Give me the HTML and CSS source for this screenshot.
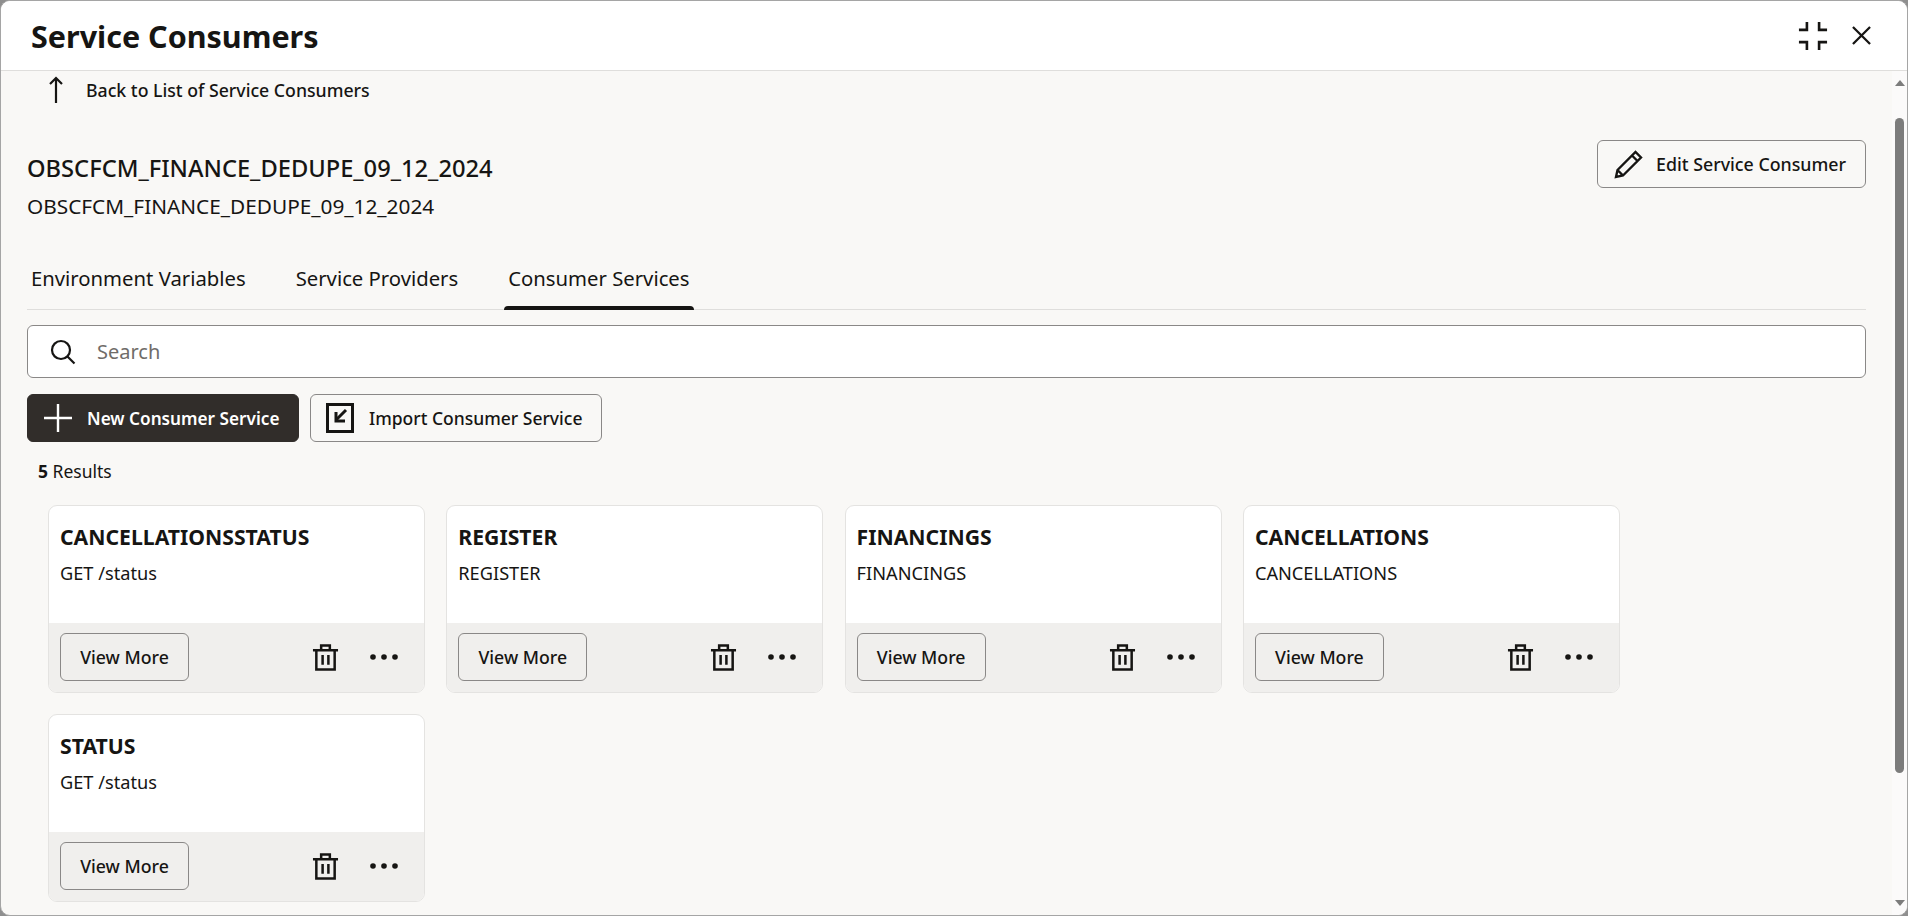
FILE: index.html
```html
<!DOCTYPE html>
<html lang="en">

<head>
    <meta charset="UTF-8">
    <title>Service Consumers</title>
    <link rel="stylesheet" href="styles.css">
</head>

<body>
    <div class="window">
        <div class="window-header">
            <h1>Service Consumers</h1>
            <div class="window-actions">
                <svg class="icon-collapse" viewBox="0 0 32 32" fill="none" stroke="#161513" stroke-width="2.800">
                    <path d="M1 9.500h8.500V1M22.500 1v8.500H31M1 22.500h8.500V31M31 22.500h-8.500V31" />
                </svg>
                <svg class="icon-close" viewBox="0 0 20 20" fill="none" stroke="#161513" stroke-width="2.400">
                    <path d="M1 1l18 18M19 1L1 19" />
                </svg>
            </div>
        </div>

        <div class="window-body">
            <div class="content">
                <a class="back-link">
                    <svg class="icon-back" viewBox="0 0 16 28" fill="none" stroke="#161513" stroke-width="2.200">
                        <path d="M8 27V2M2 8l6-6 6 6" />
                    </svg>
                    <span>Back to List of Service Consumers</span>
                </a>

                <div class="title-row">
                    <div>
                        <h2>OBSCFCM_FINANCE_DEDUPE_09_12_2024</h2>
                        <p class="subtitle">OBSCFCM_FINANCE_DEDUPE_09_12_2024</p>
                    </div>
                    <button class="btn btn-edit">
                        <svg class="icon-btn" viewBox="0 0 30 30" fill="none" stroke="#161513" stroke-width="2.400">
                            <path d="M2 28l1.500-7L21.500 3l5.500 5.500L9 26.500zM3.500 21l5.500 5.500M18 6.500l5.500 5.500" />
                        </svg>
                        Edit Service Consumer
                    </button>
                </div>

                <div class="tabs">
                    <div class="tab">Environment Variables</div>
                    <div class="tab">Service Providers</div>
                    <div class="tab tab-active">Consumer Services</div>
                </div>

                <div class="search">
                    <svg class="icon-search" viewBox="0 0 26 26" fill="none" stroke="#161513" stroke-width="2.200">
                        <circle cx="11" cy="11" r="9" />
                        <path d="M17.500 17.500l7 7" />
                    </svg>
                    <span>Search</span>
                </div>

                <div class="toolbar">
                    <button class="btn btn-primary">
                        <svg class="icon-plus" viewBox="0 0 28 28" fill="none" stroke="#fff" stroke-width="2.400">
                            <path d="M14 0v28M0 14h28" />
                        </svg>
                        New Consumer Service
                    </button>
                    <button class="btn btn-import">
                        <svg class="icon-import" viewBox="0 0 28 32" fill="none" stroke="#161513">
                            <rect x="1.500" y="2.500" width="25" height="27" stroke-width="3" />
                            <path d="M20 8l-9.500 9.500" stroke-width="3" />
                            <path d="M10 10v9h9" stroke-width="3" />
                        </svg>
                        Import Consumer Service
                    </button>
                </div>

                <div class="results"><strong>5</strong> Results</div>

                <div class="cards">
                    <div class="card">
                        <div class="card-body">
                            <h3>CANCELLATIONSSTATUS</h3>
                            <p>GET /status</p>
                        </div>
                        <div class="card-footer">
                            <button class="btn btn-more">View More</button>
                            <svg class="icon-trash" viewBox="0 0 28 28" fill="none" stroke="#161513" stroke-width="2.600">
                                <path d="M1 6.500h26M4.500 6.500v20h19v-20M9.500 6.500V1.500h9v5M11 11.500v10M17 11.500v10" />
                            </svg>
                            <svg class="icon-dots" viewBox="0 0 28 6" fill="#161513">
                                <circle cx="3" cy="3" r="2.800" />
                                <circle cx="14" cy="3" r="2.800" />
                                <circle cx="25" cy="3" r="2.800" />
                            </svg>
                        </div>
                    </div>
                    <div class="card">
                        <div class="card-body">
                            <h3>REGISTER</h3>
                            <p>REGISTER</p>
                        </div>
                        <div class="card-footer">
                            <button class="btn btn-more">View More</button>
                            <svg class="icon-trash" viewBox="0 0 28 28" fill="none" stroke="#161513" stroke-width="2.600">
                                <path d="M1 6.500h26M4.500 6.500v20h19v-20M9.500 6.500V1.500h9v5M11 11.500v10M17 11.500v10" />
                            </svg>
                            <svg class="icon-dots" viewBox="0 0 28 6" fill="#161513">
                                <circle cx="3" cy="3" r="2.800" />
                                <circle cx="14" cy="3" r="2.800" />
                                <circle cx="25" cy="3" r="2.800" />
                            </svg>
                        </div>
                    </div>
                    <div class="card">
                        <div class="card-body">
                            <h3>FINANCINGS</h3>
                            <p>FINANCINGS</p>
                        </div>
                        <div class="card-footer">
                            <button class="btn btn-more">View More</button>
                            <svg class="icon-trash" viewBox="0 0 28 28" fill="none" stroke="#161513" stroke-width="2.600">
                                <path d="M1 6.500h26M4.500 6.500v20h19v-20M9.500 6.500V1.500h9v5M11 11.500v10M17 11.500v10" />
                            </svg>
                            <svg class="icon-dots" viewBox="0 0 28 6" fill="#161513">
                                <circle cx="3" cy="3" r="2.800" />
                                <circle cx="14" cy="3" r="2.800" />
                                <circle cx="25" cy="3" r="2.800" />
                            </svg>
                        </div>
                    </div>
                    <div class="card">
                        <div class="card-body">
                            <h3>CANCELLATIONS</h3>
                            <p>CANCELLATIONS</p>
                        </div>
                        <div class="card-footer">
                            <button class="btn btn-more">View More</button>
                            <svg class="icon-trash" viewBox="0 0 28 28" fill="none" stroke="#161513" stroke-width="2.600">
                                <path d="M1 6.500h26M4.500 6.500v20h19v-20M9.500 6.500V1.500h9v5M11 11.500v10M17 11.500v10" />
                            </svg>
                            <svg class="icon-dots" viewBox="0 0 28 6" fill="#161513">
                                <circle cx="3" cy="3" r="2.800" />
                                <circle cx="14" cy="3" r="2.800" />
                                <circle cx="25" cy="3" r="2.800" />
                            </svg>
                        </div>
                    </div>
                    <div class="card">
                        <div class="card-body">
                            <h3>STATUS</h3>
                            <p>GET /status</p>
                        </div>
                        <div class="card-footer">
                            <button class="btn btn-more">View More</button>
                            <svg class="icon-trash" viewBox="0 0 28 28" fill="none" stroke="#161513" stroke-width="2.600">
                                <path d="M1 6.500h26M4.500 6.500v20h19v-20M9.500 6.500V1.500h9v5M11 11.500v10M17 11.500v10" />
                            </svg>
                            <svg class="icon-dots" viewBox="0 0 28 6" fill="#161513">
                                <circle cx="3" cy="3" r="2.800" />
                                <circle cx="14" cy="3" r="2.800" />
                                <circle cx="25" cy="3" r="2.800" />
                            </svg>
                        </div>
                    </div>
                </div>
            </div>

            <div class="scrollbar">
                <div class="scroll-up"></div>
                <div class="scroll-thumb"></div>
                <div class="scroll-down"></div>
            </div>
        </div>
    </div>
</body>

</html>
```

FILE: styles.css
```css
* {
    box-sizing: border-box;
}

html,
body {
    height: 100%;
}

body {
    margin: 0;
    overflow: hidden;
    font-family: "Noto Sans", "Open Sans", sans-serif;
    color: #161513;
    background: #8f8f8f;
}

.window {
    height: 100%;
    display: flex;
    flex-direction: column;
    border: 1px solid #a5a5a5;
    border-radius: 10px;
    overflow: hidden;
    background: #f9f8f6;
}

.window-header {
    height: 70px;
    flex: none;
    display: flex;
    align-items: center;
    justify-content: space-between;
    padding: 0 36px 0 30px;
    background: #fff;
    border-bottom: 1px solid #dfdedc;
}

.window-header h1 {
    margin: 0;
    font-size: 30.500px;
    font-weight: 700;
}

.window-actions {
    display: flex;
    align-items: center;
    gap: 24px;
}

.icon-collapse {
    width: 30px;
    height: 30px;
}

.icon-close {
    width: 19px;
    height: 19px;
}

.window-body {
    flex: 1;
    display: flex;
    min-height: 0;
}

.content {
    flex: 1;
    min-width: 0;
    padding: 0 26px 0 26px;
}

.back-link {
    display: flex;
    align-items: center;
    height: 37px;
    padding-left: 21px;
    font-size: 17.700px;
    font-weight: 500;
}

.icon-back {
    width: 16px;
    height: 28px;
    margin-right: 22px;
}

.title-row {
    display: flex;
    justify-content: space-between;
    align-items: flex-start;
    padding-top: 32px;
}

.title-row h2 {
    margin: 13px 0 0;
    font-size: 23.700px;
    font-weight: 500;
    line-height: 30px;
}

.subtitle {
    margin: 9px 0 0;
    font-size: 20.800px;
    line-height: 28px;
}

.btn {
    display: inline-flex;
    align-items: center;
    height: 48px;
    padding: 0;
    border: 1px solid #8a8887;
    border-radius: 6px;
    background: transparent;
    color: #161513;
    font-family: inherit;
    font-size: 17.500px;
    font-weight: 500;
}

.btn-edit {
    width: 269px;
    padding-left: 16px;
    font-size: 17.800px;
}

.icon-btn {
    width: 30px;
    height: 30px;
    margin-right: 12px;
}

.tabs {
    display: flex;
    gap: 50px;
    height: 65px;
    margin-top: 25px;
    padding-left: 4px;
    border-bottom: 1px solid #dfdedc;
}

.tab {
    position: relative;
    padding-top: 19px;
    font-size: 20.300px;
}

.tab-active::after {
    content: "";
    position: absolute;
    left: -4px;
    right: -4px;
    bottom: -1px;
    height: 4px;
    background: #161513;
    border-radius: 4px 4px 0 0;
}

.search {
    display: flex;
    align-items: center;
    height: 53px;
    margin-top: 15px;
    padding-left: 22px;
    background: #fff;
    border: 1px solid #8a8887;
    border-radius: 6px;
    font-size: 20px;
    color: #6f6c69;
}

.icon-search {
    width: 26px;
    height: 26px;
    margin-right: 21px;
}

.toolbar {
    display: flex;
    gap: 11px;
    margin-top: 16px;
}

.btn-primary {
    width: 272px;
    padding-left: 16px;
    background: #312d2a;
    border-color: #312d2a;
    color: #fff;
    font-size: 17.200px;
    font-weight: 600;
}

.icon-plus {
    width: 28px;
    height: 28px;
    margin-right: 15px;
}

.btn-import {
    width: 292px;
    padding-left: 15px;
}

.icon-import {
    width: 28px;
    height: 32px;
    margin-right: 15px;
}

.results {
    margin: 17px 0 0 11px;
    font-size: 17.500px;
    line-height: 24px;
}

.results strong {
    font-weight: 700;
}

.cards {
    display: flex;
    flex-wrap: wrap;
    gap: 21px 21.300px;
    margin-top: 22px;
    padding-left: 21px;
}

.card {
    width: 377px;
    height: 188px;
    display: flex;
    flex-direction: column;
    border: 1px solid #e4e3e1;
    border-radius: 9px;
    overflow: hidden;
    background: #fff;
}

.card-body {
    flex: 1;
    padding: 16px 11px 0;
}

.card-body h3 {
    margin: 0;
    font-size: 21.200px;
    font-weight: 700;
    line-height: 30px;
}

.card-body p {
    margin: 9px 0 0;
    font-size: 18.200px;
    line-height: 24px;
}

.card-footer {
    height: 69px;
    flex: none;
    display: flex;
    align-items: center;
    padding: 0 11px 1px;
    background: #f0efed;
}

.btn-more {
    width: 129px;
    justify-content: center;
    margin-right: 123px;
    font-size: 17.700px;
}

.icon-trash {
    width: 27px;
    height: 27px;
    margin-right: 31px;
}

.icon-dots {
    width: 28px;
    height: 6px;
}

.scrollbar {
    position: relative;
    width: 15px;
    flex: none;
    background: #fbfafa;
}

.scroll-up,
.scroll-down {
    position: absolute;
    left: 3px;
    width: 0;
    height: 0;
    border-left: 5px solid transparent;
    border-right: 5px solid transparent;
}

.scroll-up {
    top: 9px;
    border-bottom: 6px solid #7c7c7c;
}

.scroll-down {
    bottom: 9px;
    border-top: 6px solid #7c7c7c;
}

.scroll-thumb {
    position: absolute;
    top: 47px;
    left: 3px;
    width: 9px;
    height: 655px;
    background: #7c7c7c;
    border-radius: 5px;
}
```
